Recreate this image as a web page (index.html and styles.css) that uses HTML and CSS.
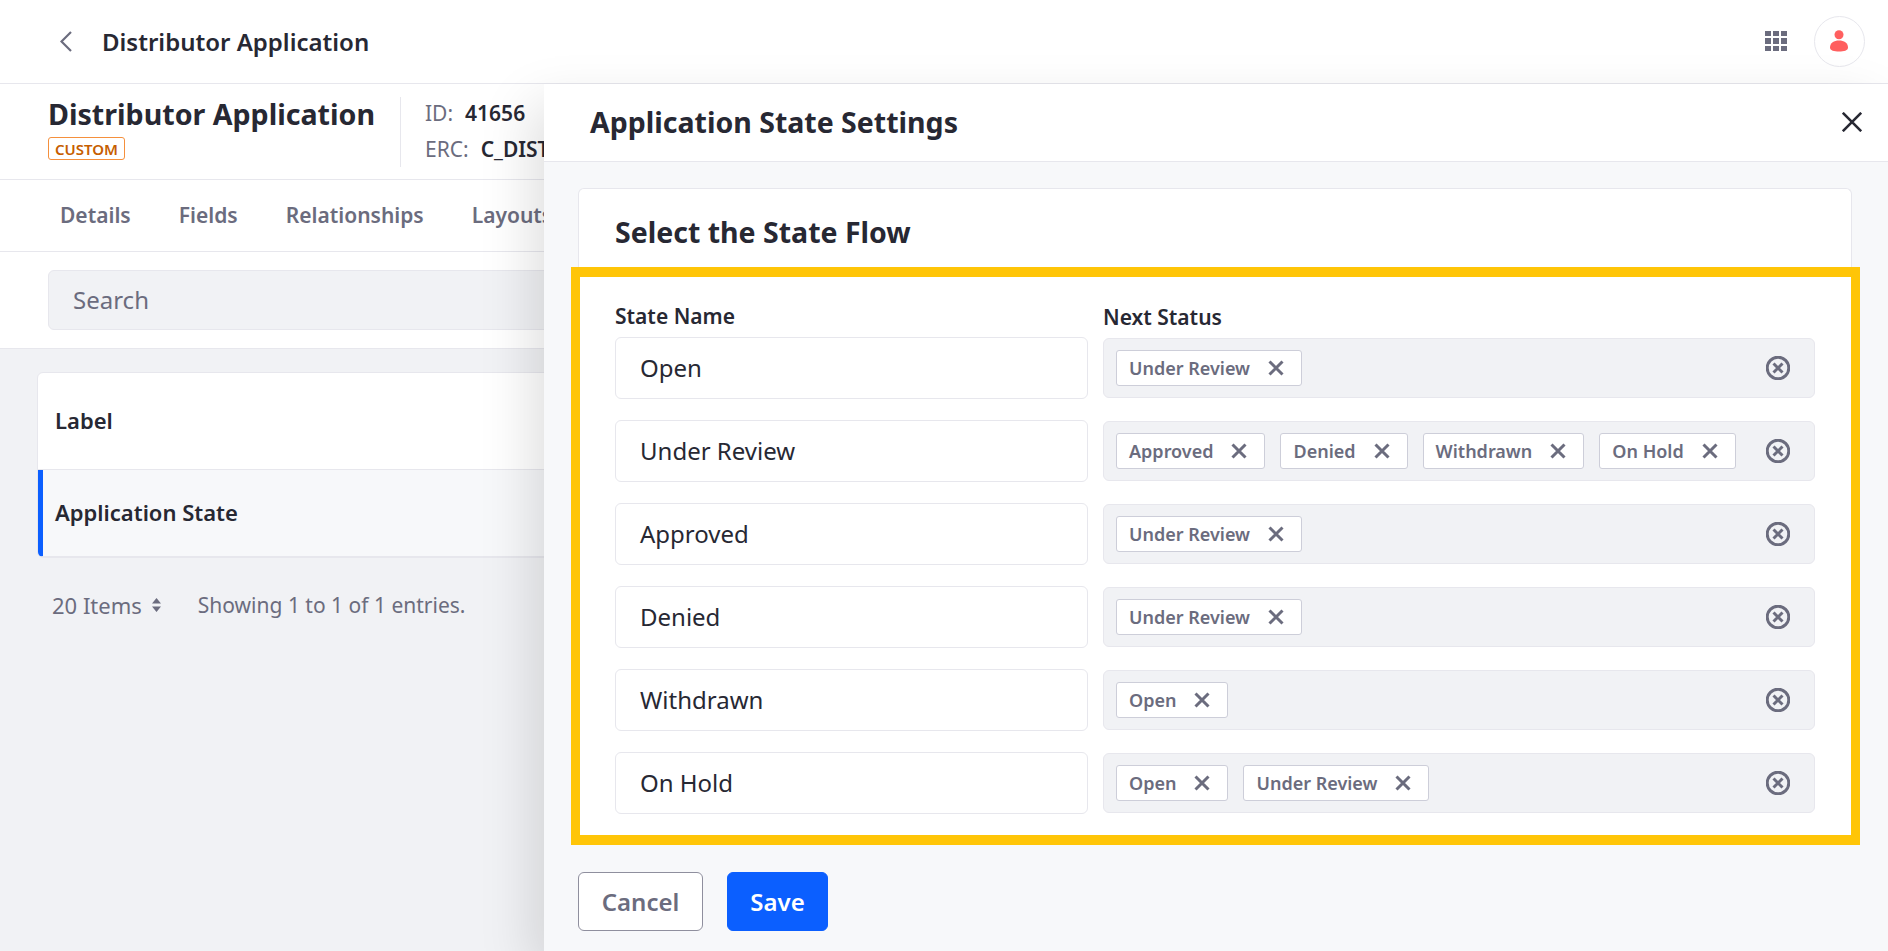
FILE: index.html
```html
<!DOCTYPE html>
<html>
<head>
    <title>Distributor Application</title>
    <link rel="stylesheet" href="styles.css">
</head>
<body>
    <svg class="defs" width="0" height="0">
        <symbol id="cross" viewBox="0 0 16 16"><path d="M1.5 1.5 14.5 14.5M14.5 1.5 1.5 14.5"/></symbol>
        <symbol id="clear" viewBox="0 0 24 24"><circle cx="12" cy="12" r="10.8" class="ring"/><path d="M7.5 7.5 16.5 16.5M16.5 7.5 7.5 16.5"/></symbol>
    </svg>

    <header class="topbar">
        <svg class="back" viewBox="0 0 12 21"><path d="M11 1 1.5 10.5 11 20"/></svg>
        <span class="topbar-title">Distributor Application</span>
        <div class="topbar-right">
            <div class="apps">
                <i></i><i></i><i></i><i></i><i></i><i></i><i></i><i></i><i></i>
            </div>
            <div class="avatar">
                <svg viewBox="0 0 18 22"><circle cx="9" cy="4.7" r="4.5"/><path d="M0 17.5C0 13 4 10.5 9 10.5S18 13 18 17.5C18 20.5 14 21.5 9 21.5S0 20.5 0 17.5Z"/></svg>
            </div>
        </div>
    </header>

    <section class="object-head">
        <div class="object-name">
            <h1>Distributor Application</h1>
            <span class="badge">CUSTOM</span>
        </div>
        <div class="object-meta">
            <div class="meta-row meta-id"><span>ID:</span><b>41656</b></div>
            <div class="meta-row meta-erc"><span>ERC:</span><b>C_DISTRIBUTOR</b></div>
        </div>
    </section>

    <nav class="tabs">
        <a>Details</a>
        <a>Fields</a>
        <a>Relationships</a>
        <a>Layouts</a>
    </nav>

    <div class="search-band">
        <div class="search">Search</div>
    </div>

    <main class="content">
        <div class="list-card">
            <div class="list-row">Label</div>
            <div class="list-row active">Application State</div>
        </div>
        <div class="pager">
            <span>20 Items</span>
            <svg class="sort" viewBox="0 0 9 14"><path d="M4.5 0 9 5.5H0ZM0 8.5H9L4.5 14Z"/></svg>
            <span class="entries">Showing 1 to 1 of 1 entries.</span>
        </div>
    </main>

    <aside class="panel">
        <div class="panel-head">
            <h2>Application State Settings</h2>
            <svg class="close" viewBox="0 0 20 20"><path d="M.8 .8 19.2 19.2M19.2 .8 .8 19.2"/></svg>
        </div>
        <div class="panel-body">
            <div class="card">
                <h3>Select the State Flow</h3>
                <div class="flow">
                    <div class="flow-labels">
                        <label>State Name</label>
                        <label class="next-label">Next Status</label>
                    </div>

                    <div class="flow-row">
                        <div class="name-input">Open</div>
                        <div class="multi">
                            <span class="chip">Under Review<svg><use href="#cross"/></svg></span>
                            <svg class="clear"><use href="#clear"/></svg>
                        </div>
                    </div>
                    <div class="flow-row">
                        <div class="name-input">Under Review</div>
                        <div class="multi">
                            <span class="chip">Approved<svg><use href="#cross"/></svg></span>
                            <span class="chip">Denied<svg><use href="#cross"/></svg></span>
                            <span class="chip">Withdrawn<svg><use href="#cross"/></svg></span>
                            <span class="chip">On Hold<svg><use href="#cross"/></svg></span>
                            <svg class="clear"><use href="#clear"/></svg>
                        </div>
                    </div>
                    <div class="flow-row">
                        <div class="name-input">Approved</div>
                        <div class="multi">
                            <span class="chip">Under Review<svg><use href="#cross"/></svg></span>
                            <svg class="clear"><use href="#clear"/></svg>
                        </div>
                    </div>
                    <div class="flow-row">
                        <div class="name-input">Denied</div>
                        <div class="multi">
                            <span class="chip">Under Review<svg><use href="#cross"/></svg></span>
                            <svg class="clear"><use href="#clear"/></svg>
                        </div>
                    </div>
                    <div class="flow-row">
                        <div class="name-input">Withdrawn</div>
                        <div class="multi">
                            <span class="chip">Open<svg><use href="#cross"/></svg></span>
                            <svg class="clear"><use href="#clear"/></svg>
                        </div>
                    </div>
                    <div class="flow-row">
                        <div class="name-input">On Hold</div>
                        <div class="multi">
                            <span class="chip">Open<svg><use href="#cross"/></svg></span>
                            <span class="chip">Under Review<svg><use href="#cross"/></svg></span>
                            <svg class="clear"><use href="#clear"/></svg>
                        </div>
                    </div>
                </div>
            </div>
            <div class="actions">
                <button class="btn-cancel">Cancel</button>
                <button class="btn-save">Save</button>
            </div>
        </div>
    </aside>
</body>
</html>
```

FILE: styles.css
```css
* {
    box-sizing: border-box;
}

html, body {
    height: 100%;
}

body {
    margin: 0;
    overflow: hidden;
    position: relative;
    background-color: #f1f2f5;
    color: #272833;
    font-family: "Noto Sans", sans-serif;
    font-size: 24px;
}

h1, h2, h3 {
    margin: 0;
}

.defs {
    position: absolute;
}

/* top bar */
.topbar {
    display: flex;
    align-items: center;
    height: 84px;
    padding: 0 23px 1px 60px;
    background-color: #fff;
    border-bottom: 1px solid #e7e7ed;
}

.back {
    width: 12px;
    height: 21px;
    fill: none;
    stroke: #6b6c7e;
    stroke-width: 2.2;
}

.topbar-title {
    margin-left: 30px;
    font-size: 24px;
    font-weight: 600;
}

.topbar-right {
    display: flex;
    align-items: center;
    margin-left: auto;
}

.apps {
    display: grid;
    grid-template-columns: repeat(3, 6px);
    gap: 2px;
}

.apps i {
    height: 5.67px;
    background-color: #6b6c7e;
}

.avatar {
    display: flex;
    align-items: center;
    justify-content: center;
    width: 51px;
    height: 51px;
    margin-left: 27px;
    padding-right: 2px;
    border: 1px solid #e7e7ed;
    border-radius: 50%;
    background-color: #fff;
}

.avatar svg {
    width: 18px;
    height: 22px;
    fill: #ff5f5f;
}

/* object header */
.object-head {
    display: flex;
    height: 96px;
    padding: 13px 0 12px 48px;
    background-color: #fff;
    border-bottom: 1px solid #e7e7ed;
}

.object-name {
    width: 353px;
    border-right: 1px solid #e7e7ed;
}

.object-name h1 {
    margin-top: -1px;
    font-size: 28.6px;
    font-weight: 700;
    line-height: 36px;
}

.badge {
    display: block;
    width: fit-content;
    height: 23px;
    margin-top: 5px;
    padding: 0 6px;
    border: 1px solid #f5903d;
    border-radius: 3px;
    color: #c65e00;
    font-size: 15px;
    font-weight: 600;
    line-height: 22px;
}

.object-meta {
    margin-top: -2px;
    padding-left: 24px;
    font-size: 21px;
    line-height: 36px;
    white-space: nowrap;
}

.meta-row span {
    color: #6b6c7e;
}

.meta-row b {
    margin-left: 12px;
    font-weight: 600;
}

/* tabs */
.tabs {
    display: flex;
    gap: 48px;
    align-items: center;
    height: 72px;
    padding: 0 0 2px 60px;
    background-color: #fff;
    border-bottom: 1px solid #e7e7ed;
    color: #6b6c7e;
    font-size: 21px;
    font-weight: 600;
}

/* search */
.search-band {
    height: 97px;
    padding: 18px 48px;
    background-color: #fff;
    border-bottom: 1px solid #e7e7ed;
}

.search {
    height: 60px;
    padding-left: 24px;
    background-color: #f1f2f5;
    border: 1px solid #e7e7ed;
    border-radius: 6px;
    color: #6b6c7e;
    line-height: 58px;
}

/* list behind the panel */
.content {
    padding: 23px 37px;
}

.list-card {
    background-color: #fff;
    border: 1px solid #e7e7ed;
    border-radius: 6px;
    font-size: 22px;
    font-weight: 600;
    overflow: hidden;
}

.list-row {
    height: 97px;
    padding-left: 17px;
    line-height: 95px;
    border-bottom: 1px solid #e7e7ed;
}

.list-row.active {
    height: 87px;
    padding-left: 12px;
    line-height: 85px;
    background-color: #f7f8fa;
    border-left: 5px solid #0b5fff;
}

.pager {
    display: flex;
    align-items: center;
    height: 40px;
    margin-top: 27px;
    padding-left: 15px;
    color: #6b6c7e;
    font-size: 22px;
}

.sort {
    width: 9px;
    height: 14px;
    margin-left: 10px;
    fill: #6b6c7e;
}

.entries {
    margin-left: 37px;
    font-size: 21px;
}

/* slide-over panel */
.panel {
    position: absolute;
    top: 84px;
    right: 0;
    bottom: 0;
    left: 544px;
    background-color: #f7f8fa;
    box-shadow: -12px 20px 50px rgba(0, 0, 0, 0.13);
}

.panel-head {
    display: flex;
    align-items: center;
    justify-content: space-between;
    height: 78px;
    padding: 0 26px 2px 46px;
    background-color: #fff;
    border-bottom: 1px solid #e7e7ed;
}

.panel-head h2 {
    font-size: 28.5px;
    font-weight: 700;
}

.close {
    width: 20px;
    height: 20px;
    fill: none;
    stroke: #272833;
    stroke-width: 2.6;
}

.panel-body {
    padding: 26px 36px 0 34px;
}

.card {
    background-color: #fff;
    border: 1px solid #e7e7ed;
    border-bottom: none;
    border-radius: 6px 6px 0 0;
}

.card h3 {
    height: 78px;
    padding-left: 36px;
    font-size: 28.5px;
    font-weight: 700;
    line-height: 86px;
}

.flow {
    margin: 0 -9px 0 -8px;
    padding: 0 36px 21px 35px;
    background-color: #fff;
    border: solid #ffc507;
    border-width: 10px 9px;
}

.flow-labels {
    display: grid;
    grid-template-columns: 473px 1fr;
    column-gap: 15px;
    height: 60px;
    padding-top: 26px;
    font-size: 21px;
    font-weight: 600;
    line-height: 26px;
}

.next-label {
    padding-top: 1px;
}

.flow-row {
    display: grid;
    grid-template-columns: 473px 1fr;
    column-gap: 15px;
    align-items: center;
    height: 62px;
    margin-bottom: 21px;
}

.flow-row:last-child {
    margin-bottom: 0;
}

.name-input {
    height: 62px;
    padding-left: 24px;
    border: 1px solid #e7e7ed;
    border-radius: 6px;
    line-height: 60px;
}

.multi {
    display: flex;
    align-items: center;
    gap: 15px;
    height: 60px;
    padding: 0 12px;
    background-color: #f1f2f5;
    border: 1px solid #e7e7ed;
    border-radius: 6px;
}

.chip {
    display: flex;
    align-items: center;
    height: 36px;
    padding: 0 17px 0 12px;
    background-color: #fff;
    border: 1px solid #cdced9;
    border-radius: 3px;
    color: #6b6c7e;
    font-size: 18px;
    font-weight: 600;
}

.chip svg {
    width: 16px;
    height: 16px;
    margin-left: 18px;
    fill: none;
    stroke: #6b6c7e;
    stroke-width: 3;
}

.clear {
    width: 24px;
    height: 24px;
    margin-left: auto;
    margin-right: 12px;
    fill: none;
    stroke: #6b6c7e;
    stroke-width: 3;
}

.clear .ring {
    stroke-width: 2.2;
}

.actions {
    display: flex;
    gap: 24px;
    margin-top: 27px;
}

.actions button {
    height: 59px;
    border-radius: 6px;
    font-family: inherit;
    font-size: 24px;
    font-weight: 600;
}

.btn-cancel {
    width: 125px;
    background-color: #fff;
    border: 1px solid #8f8f9e;
    color: #6b6c7e;
}

.btn-save {
    width: 101px;
    background-color: #0b5fff;
    border: 1px solid #0b5fff;
    color: #fff;
}
```
